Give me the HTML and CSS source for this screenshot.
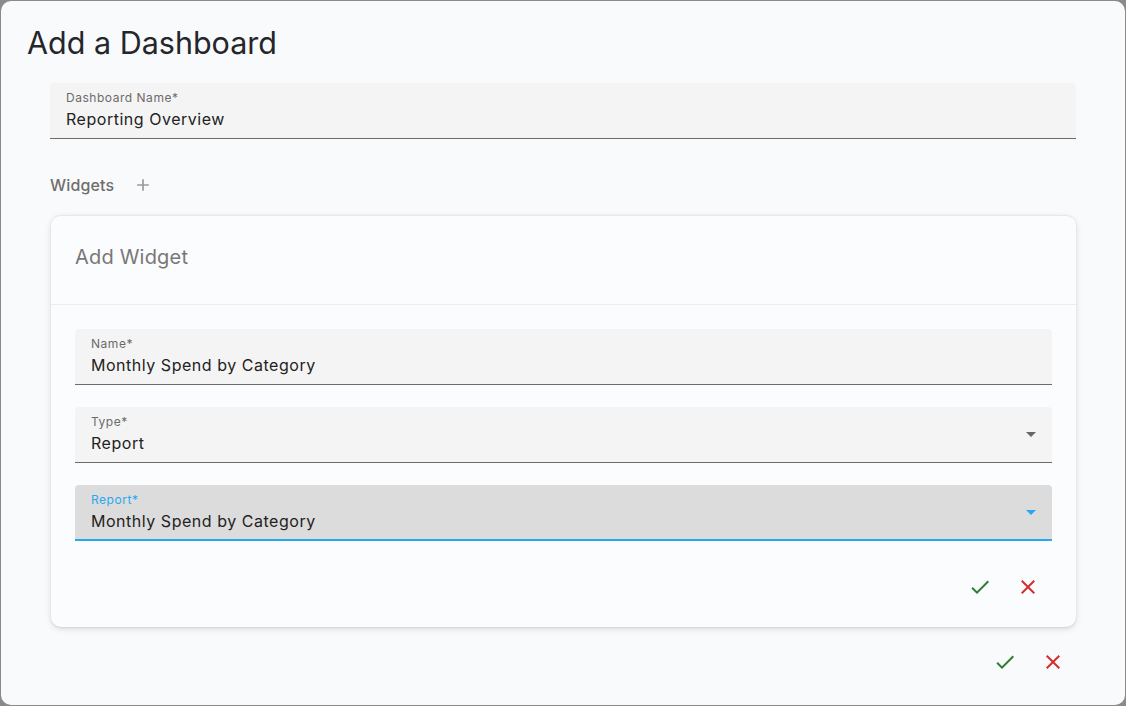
FILE: index.html
```html
<!DOCTYPE html>
<html lang="en">
<head>
  <meta charset="UTF-8">
  <meta name="viewport" content="width=device-width, initial-scale=1">
  <title>Add a Dashboard</title>
  <link rel="stylesheet" href="styles.css">
</head>
<body>
  <div class="dialog">
    <h1 class="dialog-title">Add a Dashboard</h1>

    <div class="dialog-content">
      <div class="field">
        <label>Dashboard Name*</label>
        <div class="value">Reporting Overview</div>
      </div>

      <div class="widgets-head">
        <span>Widgets</span>
        <button class="icon-btn add-btn" aria-label="Add widget">
          <svg viewBox="0 0 24 24" width="20" height="20"><path d="M19 13h-6v6h-2v-6H5v-2h6V5h2v6h6v2z" fill="currentColor"/></svg>
        </button>
      </div>

      <div class="card">
        <div class="card-header">Add Widget</div>
        <div class="card-body">
          <div class="field">
            <label>Name*</label>
            <div class="value">Monthly Spend by Category</div>
          </div>
          <div class="field select">
            <label>Type*</label>
            <div class="value">Report</div>
            <span class="arrow"></span>
          </div>
          <div class="field select focused">
            <label>Report*</label>
            <div class="value">Monthly Spend by Category</div>
            <span class="arrow"></span>
          </div>
          <div class="actions">
            <button class="icon-btn ok" aria-label="Save">
              <svg viewBox="0 0 24 24" width="24" height="24"><path d="M9 16.17 4.83 12l-1.42 1.41L9 19 21 7l-1.41-1.41z" fill="currentColor"/></svg>
            </button>
            <button class="icon-btn cancel" aria-label="Cancel">
              <svg viewBox="0 0 24 24" width="24" height="24"><path d="M19 6.41 17.59 5 12 10.59 6.41 5 5 6.41 10.59 12 5 17.59 6.41 19 12 13.41 17.59 19 19 17.59 13.41 12z" fill="currentColor"/></svg>
            </button>
          </div>
        </div>
      </div>
    </div>

    <div class="dialog-actions">
      <button class="icon-btn ok" aria-label="Save dashboard">
        <svg viewBox="0 0 24 24" width="24" height="24"><path d="M9 16.17 4.83 12l-1.42 1.41L9 19 21 7l-1.41-1.41z" fill="currentColor"/></svg>
      </button>
      <button class="icon-btn cancel" aria-label="Cancel dashboard">
        <svg viewBox="0 0 24 24" width="24" height="24"><path d="M19 6.41 17.59 5 12 10.59 6.41 5 5 6.41 10.59 12 5 17.59 6.41 19 12 13.41 17.59 19 19 17.59 13.41 12z" fill="currentColor"/></svg>
      </button>
    </div>
  </div>
</body>
</html>
```

FILE: styles.css
```css
html, body {
  margin: 0;
  padding: 0;
  height: 100%;
}

body {
  background: #8a8a8a;
  font-family: Inter, 'Noto Sans', sans-serif;
  padding: 1px;
  box-sizing: border-box;
}

.dialog {
  height: 100%;
  background: #f9fafb;
  border-radius: 10px;
  box-sizing: border-box;
  display: flex;
  flex-direction: column;
  overflow: hidden;
}

.dialog-title {
  margin: 0;
  padding: 20px 26px 18px;
  font-size: 30.5px;
  font-weight: 400;
  color: #24262b;
  line-height: 44px;
}

.dialog-content {
  padding: 0 49px 0 49px;
  display: flex;
  flex-direction: column;
}

.field {
  position: relative;
  height: 56px;
  background: #f4f4f4;
  border-radius: 4px 4px 0 0;
  border-bottom: 1px solid #6b6b6b;
  box-sizing: border-box;
  padding: 8px 16px 0;
  letter-spacing: 0.033em;
}

.field label {
  display: block;
  font-size: 12px;
  line-height: 14px;
  color: #6b6b6b;
}

.field .value {
  font-size: 16px;
  line-height: 24px;
  margin-top: 2px;
  color: #222;
}

.field .arrow {
  position: absolute;
  right: 16px;
  top: 25px;
  width: 0;
  height: 0;
  border-left: 5px solid transparent;
  border-right: 5px solid transparent;
  border-top: 5px solid #666;
}

.field.focused {
  background: #dcdcdc;
  border-bottom: 2px solid #29a8f0;
}

.field.focused label {
  color: #29a8f0;
}

.field.focused .arrow {
  border-top-color: #29a8f0;
}

.widgets-head {
  display: flex;
  align-items: center;
  gap: 17px;
  margin: 34px 0 18px;
  font-size: 16px;
  font-weight: 500;
  color: #6e6e6e;
  letter-spacing: 0.01em;
}

.icon-btn {
  border: none;
  background: none;
  padding: 0;
  width: 40px;
  height: 40px;
  display: flex;
  align-items: center;
  justify-content: center;
  cursor: pointer;
}

.add-btn {
  width: 24px;
  height: 24px;
  color: #9a9a9a;
}

.card {
  margin-left: 1px;
  background: #fbfcfd;
  border-radius: 10px;
  box-shadow: 0 2px 6px rgba(0, 0, 0, 0.12), 0 1px 2px rgba(0, 0, 0, 0.08);
  border-top: 1px solid #e8e8e8;
}

.card-header {
  height: 89px;
  box-sizing: border-box;
  padding: 0 24px 6px;
  display: flex;
  align-items: center;
  font-size: 20px;
  color: #777;
  letter-spacing: 0.01em;
  border-bottom: 1px solid #ececec;
}

.card-body {
  padding: 24px 24px 20px;
  display: flex;
  flex-direction: column;
  gap: 22px;
}

.actions {
  display: flex;
  justify-content: flex-end;
  gap: 8px;
  margin-top: 4px;
  padding-right: 4px;
}

.ok {
  color: #2e7d32;
}

.cancel {
  color: #d32f2f;
}

.dialog-actions {
  display: flex;
  justify-content: flex-end;
  gap: 8px;
  padding: 15px 52px 0 0;
}
```
